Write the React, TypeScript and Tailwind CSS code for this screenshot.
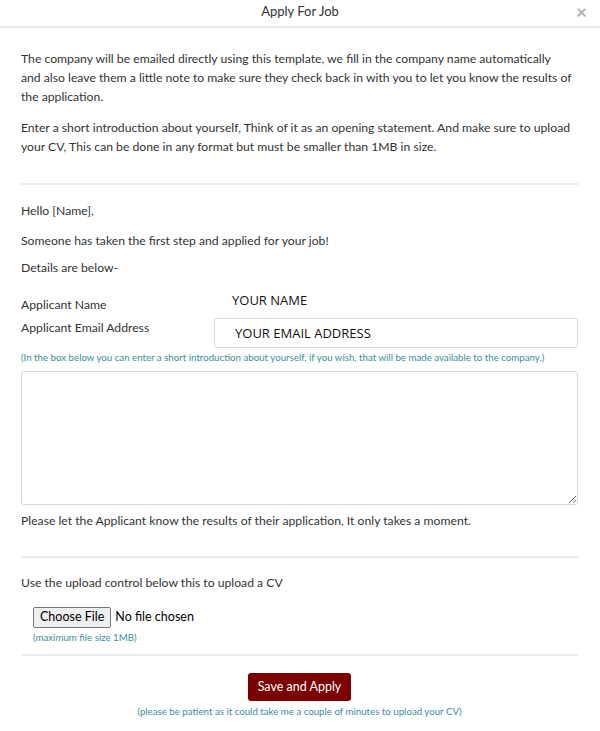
import { useState } from "react";

const Note = ({ children, className = "" }: { children: React.ReactNode; className?: string }) => (
	<p className={`text-[9.7px] leading-[12px] text-[#3b8e99] ${className}`}>{children}</p>
);

const Divider = ({ className = "" }: { className?: string }) => (
	<hr className={`border-0 border-t-2 border-[#ececec] ${className}`} />
);

export default function App() {
	const [intro, setIntro] = useState("");

	return (
		<div className="w-[600px] min-h-[731px] bg-white text-[#333] font-['Lato','Open_Sans',sans-serif] text-[12.2px]">
			{/* header */}
			<div className="relative h-[28px] flex items-center justify-center border-b-2 border-[#e8e8e8]">
				<span className="text-[13px] text-[#333] -mt-[3px]">Apply For Job</span>
				<button className="absolute right-[13px] top-[2px] text-[19px] leading-none text-[#b0b0b0] font-bold">
					×
				</button>
			</div>

			<div className="pl-[21px] pr-[22px]">
				<div className="pt-[21px] leading-[19px]">
					<p>
						The company will be emailed directly using this template, we fill in the company name automatically
						<br />
						and also leave them a little note to make sure they check back in with you to let you know the results of
						<br />
						the application.
					</p>
					<p className="mt-[12px]">
						Enter a short introduction about yourself, Think of it as an opening statement. And make sure to upload
						<br />
						your CV, This can be done in any format but must be smaller than 1MB in size.
					</p>
				</div>

				<Divider className="mt-[27px]" />

				<div className="leading-[19px]">
					<p className="mt-[16px]">Hello [Name],</p>
					<p className="mt-[11px]">Someone has taken the first step and applied for your job!</p>
					<p className="mt-[8px]">Details are below-</p>

					<div className="mt-[10px] flex items-center">
						<span className="w-[211px] mt-[8px]">Applicant Name</span>
						<span className="font-['Open_Sans',sans-serif] text-[13px] font-medium text-[#111]">YOUR NAME</span>
					</div>
					<div className="mt-[4px] flex items-center">
						<span className="w-[193px] -mt-[11px]">Applicant Email Address</span>
						<div className="flex-1 h-[30px] border border-[#d9d9d9] rounded-[3px] flex items-center pl-[20px] font-['Open_Sans',sans-serif] text-[13px] font-medium text-[#111]">
							YOUR EMAIL ADDRESS
						</div>
					</div>
				</div>

				<Note className="mt-[3px]">
					(In the box below you can enter a short introduction about yourself, if you wish, that will be made available to the company.)
				</Note>

				<textarea
					value={intro}
					onChange={(e) => setIntro(e.target.value)}
					className="mt-[8px] block w-full h-[134px] border border-[#d9d9d9] rounded-[3px] outline-none p-2"
				/>

				<p className="mt-[6px] leading-[19px]">
					Please let the Applicant know the results of their application, It only takes a moment.
				</p>

				<Divider className="mt-[26px]" />

				<p className="mt-[15px] leading-[19px]">Use the upload control below this to upload a CV</p>

				<div className="ml-[12px] mt-[15px] flex items-center gap-[4px]">
					<button className="h-[21px] px-[6px] bg-[#efefef] border border-[#767676] rounded-[2px] text-[12.5px] text-black">
						Choose File
					</button>
					<span className="text-[12.5px] text-black">No file chosen</span>
				</div>
				<Note className="ml-[12px] mt-[3px]">(maximum file size 1MB)</Note>

				<Divider className="mt-[11px]" />

				<div className="flex flex-col items-center">
					<button className="mt-[17px] h-[28px] px-[10px] bg-[#7b0000] text-white rounded-[3px] text-[12.5px]">
						Save and Apply
					</button>
					<Note className="mt-[4px]">(please be patient as it could take me a couple of minutes to upload your CV)</Note>
				</div>
			</div>
		</div>
	);
}
